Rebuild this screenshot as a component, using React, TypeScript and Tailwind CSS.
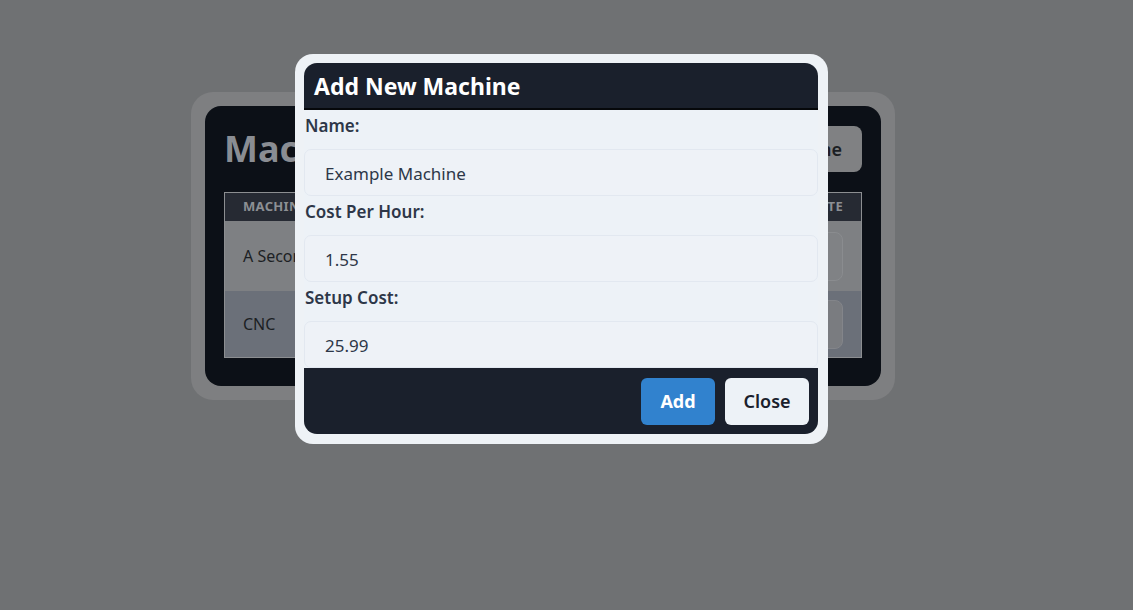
import React from "react";

const font = { fontFamily: '"Noto Sans", "Open Sans", sans-serif' };

type Machine = { name: string };

const machines: Machine[] = [{ name: "A Second Machine" }, { name: "CNC" }];

function MachineTable() {
  return (
    <div className="w-[704px] h-[308px] p-[14px] rounded-[22px] bg-[#7e7f81]">
      <div className="h-full rounded-[16px] bg-[#0c1017] px-[19px] pt-[20px]">
        <div className="flex items-center justify-between h-[46px]">
          <h1 className="text-[36px] font-bold text-[#8a8d93] leading-none">Machines</h1>
          <button className="h-[46px] px-[20px] rounded-[8px] bg-[#808183] text-[18px] font-semibold text-[#1c1f24]">
            Add Machine
          </button>
        </div>
        <div className="mt-[20px] border border-[#8c8e91]">
          <div className="flex h-[28px] items-center justify-between bg-[#262a33] px-[18px] text-[13px] font-bold uppercase tracking-wide text-[#8c8f94]">
            <span>Machine</span>
            <span>Delete</span>
          </div>
          {machines.map((m, i) => (
            <div
              key={m.name}
              className={
                "flex items-center justify-between pl-[18px] pr-[18px] " +
                (i === 0 ? "h-[70px] bg-[#7e8083]" : "h-[66px] bg-[#6b7079]")
              }
            >
              <span className="text-[16px] text-[#1c1f24]">{m.name}</span>
              <button
                className={
                  "h-[49px] w-[80px] rounded-[8px] border " +
                  (i === 0 ? "bg-[#808285] border-[#8a8c8f]" : "bg-[#7a7c80] border-[#83858a]")
                }
              />
            </div>
          ))}
        </div>
      </div>
    </div>
  );
}

function Field({ label, value }: { label: string; value: string }) {
  return (
    <div>
      <label className="block pl-[1px] pt-[3px] pb-[10px] text-[17px] leading-[26px] font-semibold text-[#2d3748]">
        {label}
      </label>
      <div className="h-[47px] flex items-center px-[20px] pt-[2px] rounded-[7px] border border-[#e2e8f0] bg-[#eef2f7] text-[17px] text-[#2d3748]">
        {value}
      </div>
    </div>
  );
}

export default function App() {
  return (
    <div style={font} className="relative min-h-screen bg-[#6f7173] pl-[191px] pt-[92px]">
      <MachineTable />

      <div className="absolute inset-0">
        <div className="absolute left-[295px] top-[54px] w-[533px] pt-[9px] pl-[9px] pr-[10px] pb-[10px] rounded-[18px] bg-[#eef2f6]">
          <div className="rounded-[13px] overflow-hidden">
            <div className="h-[47px] flex items-center px-[10px] bg-[#1a202c] border-b-2 border-[#06080b]">
              <h2 className="text-[23px] font-bold text-white pt-[2px]">Add New Machine</h2>
            </div>
            <div className="h-[258px] overflow-hidden bg-[#edf2f7]">
              <Field label="Name:" value="Example Machine" />
              <Field label="Cost Per Hour:" value="1.55" />
              <Field label="Setup Cost:" value="25.99" />
            </div>
            <div className="h-[66px] flex justify-end gap-[10px] pt-[10px] pr-[9px] bg-[#1a202c]">
              <button className="h-[47px] w-[74px] rounded-[6px] bg-[#3182ce] text-[18px] font-bold text-white">
                Add
              </button>
              <button className="h-[47px] w-[84px] rounded-[6px] bg-[#edf2f7] text-[18px] font-semibold text-[#1a202c]">
                Close
              </button>
            </div>
          </div>
        </div>
      </div>
    </div>
  );
}
